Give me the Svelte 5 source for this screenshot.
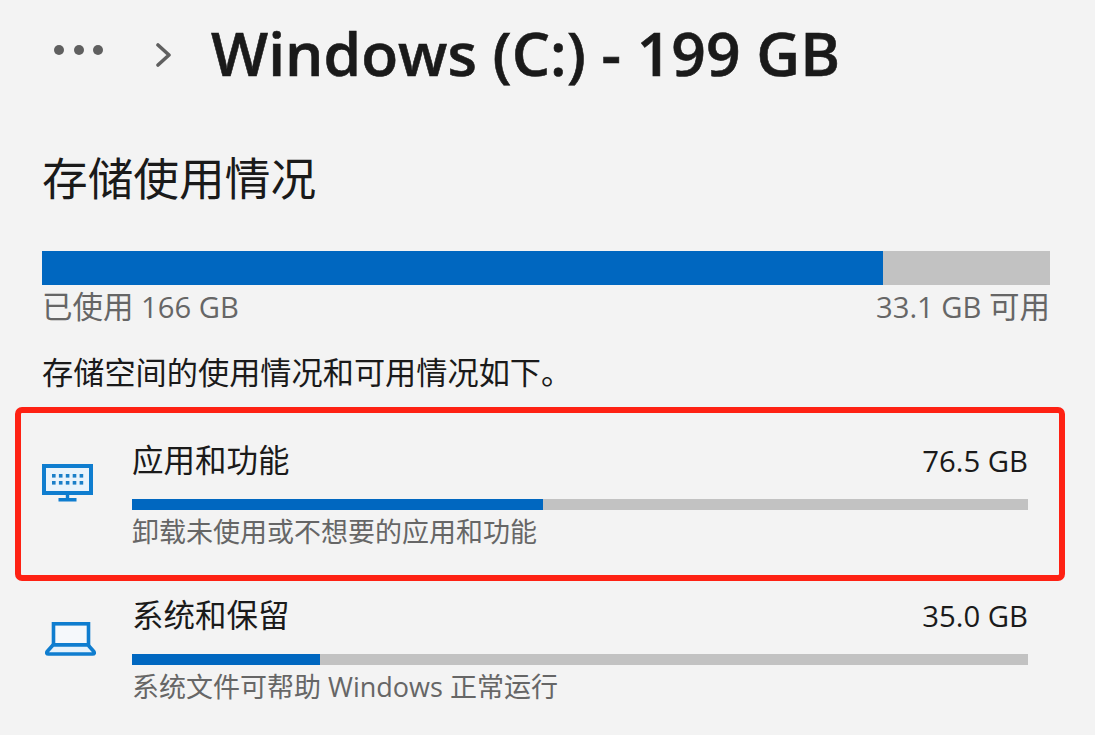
<script>
	const items = [
		{
			name: '应用和功能',
			size: '76.5 GB',
			percent: 45.9,
			hint: '卸载未使用或不想要的应用和功能',
			icon: 'desktop',
			selected: true
		},
		{
			name: '系统和保留',
			size: '35.0 GB',
			percent: 21,
			hint: '系统文件可帮助 Windows 正常运行',
			icon: 'laptop',
			selected: false
		}
	];
	const keys = [0, 1, 2, 3, 4];
</script>

<div class="page">
	<header class="crumbs">
		<div class="dots"><i></i><i></i><i></i></div>
		<svg class="chevron" width="15" height="24" viewBox="0 0 15 24">
			<path d="M2 2 L13 12 L2 22" fill="none" stroke="#5f5f5f" stroke-width="3.6" stroke-linecap="round" stroke-linejoin="round" />
		</svg>
		<h1>Windows (C:) - 199 GB</h1>
	</header>

	<h2>存储使用情况</h2>

	<div class="total"><div class="used"></div></div>
	<div class="legend">
		<span><span class="cjk">已使用</span> 166 GB</span>
		<span>33.1 GB <span class="cjk">可用</span></span>
	</div>

	<p class="desc">存储空间的使用情况和可用情况如下。</p>

	{#each items as item}
		<div class="item" class:selected={item.selected}>
			<div class="icon">
				{#if item.icon === 'desktop'}
					<svg class="desktop" width="52" height="38" viewBox="0 0 52 38">
						<rect x="2" y="2" width="47" height="27" fill="#e9f3fb" stroke="#0f7dcf" stroke-width="4" />
						{#each [10, 17] as y}
							{#each keys as k}
								<rect x={10 + k * 6.9} y={y} width="3.6" height="3.6" fill="#1a7fc8" />
							{/each}
						{/each}
						<path d="M25.5 30v5 M16.5 35.7h18" stroke="#0f7dcf" stroke-width="3.4" fill="none" />
					</svg>
				{:else}
					<svg class="laptop" width="52" height="34" viewBox="0 0 52 34">
						<rect x="8.5" y="1.8" width="35" height="21" fill="#f5f8fb" stroke="#0f7dcf" stroke-width="3.6" />
						<path d="M8 23 L2.2 29.5 Q0.8 32 3.5 32 H47.5 Q50.2 32 48.8 29.5 L43 23 Z" fill="#e6f2fb" stroke="#0f7dcf" stroke-width="3.6" stroke-linejoin="round" />
					</svg>
				{/if}
			</div>
			<div class="body">
				<div class="top">
					<span class="name">{item.name}</span>
					<span class="size">{item.size}</span>
				</div>
				<div class="bar"><div class="fill" style="width: {item.percent}%"></div></div>
				<div class="hint">{item.hint}</div>
			</div>
		</div>
	{/each}
</div>

<style>
	:global(body) {
		margin: 0;
		background: #f3f3f3;
	}

	.page {
		width: 1095px;
		height: 735px;
		overflow: hidden;
		box-sizing: border-box;
		padding: 0 45px 0 42px;
		background: #f3f3f3;
		font-family: 'Open Sans', 'Noto Sans CJK SC', sans-serif;
		color: #1a1a1a;
	}

	.crumbs {
		display: flex;
		align-items: center;
		height: 110px;
	}

	.dots {
		display: flex;
		gap: 9.5px;
		margin-left: 12px;
		margin-bottom: 10px;
	}

	.dots i {
		width: 10px;
		height: 10px;
		border-radius: 50%;
		background: #5f5f5f;
	}

	.chevron {
		margin-left: 53px;
		margin-top: 0;
	}

	h1 {
		margin: -4px 0 0 40px;
		font-size: 60.5px;
		font-weight: 600;
		line-height: 1;
		white-space: nowrap;
		-webkit-text-stroke: 0.6px #1a1a1a;
	}

	h2 {
		margin: 38px 0 0;
		font-size: 45.7px;
		font-weight: 400;
		line-height: 60px;
	}

	.total {
		height: 34px;
		margin: 43px 0 0;
		background: #c2c2c2;
	}

	.used {
		width: 83.4%;
		height: 100%;
		background: #0067c0;
	}

	.legend {
		display: flex;
		justify-content: space-between;
		margin-top: -2px;
		font-size: 29.2px;
		line-height: 46px;
		color: #666;
	}

	.cjk {
		font-size: 30.5px;
	}

	.desc {
		margin: 19px 0 0;
		font-size: 31.2px;
		line-height: 46px;
	}

	.item {
		display: flex;
		margin: 0 -15px 0 -27px;
		padding: 0 31px 0 21px;
		border: 6px solid transparent;
		border-radius: 7px;
		box-sizing: border-box;
	}

	.item.selected {
		margin-top: 12px;
		height: 174px;
		padding-top: 19px;
		border-color: #fe2113;
	}

	.icon {
		width: 90px;
		flex: none;
	}

	.desktop {
		display: block;
		margin-top: 32px;
	}

	.laptop {
		display: block;
		margin: 35px 0 0 3px;
	}

	.body {
		flex: 1;
	}

	.top {
		display: flex;
		justify-content: space-between;
		align-items: baseline;
		font-size: 29.3px;
		line-height: 46px;
		margin-top: 5px;
	}

	.name {
		font-size: 31.5px;
	}

	.bar {
		height: 11px;
		margin-top: 15px;
		background: #c2c2c2;
	}

	.fill {
		height: 100%;
		background: #0067c0;
	}

	.hint {
		font-size: 27px;
		line-height: 40px;
		margin-top: 2px;
		color: #666;
	}
</style>
